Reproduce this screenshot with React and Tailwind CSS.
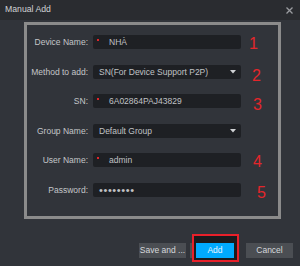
import React from 'react'

const rows = [
  { label: 'Device Name:', value: 'NHÀ', req: true, num: '1', numCls: 'ml-[8px] mt-[3px]' },
  { label: 'Method to add:', value: 'SN(For Device Support P2P)', select: true, num: '2', numCls: 'ml-[11px] mt-[5px]' },
  { label: 'SN:', value: '6A02864PAJ43829', req: true, num: '3', numCls: 'ml-[12px] mt-[5px]' },
  { label: 'Group Name:', value: 'Default Group', select: true },
  { label: 'User Name:', value: 'admin', req: true, num: '4', numCls: 'ml-[12px] mt-[3px]' },
  { label: 'Password:', value: '••••••••', pass: true, num: '5', numCls: 'ml-[16px] mt-[4px]' },
]

function Row({ label, value, req, select, pass, num, numCls }) {
  return (
    <div className="flex items-start h-[14px]">
      <div className="w-[62px] shrink-0 pr-[1px] text-right text-[8.5px] leading-[14px] text-[#c4c6c9] whitespace-nowrap">{label}</div>
      <div className="ml-[4px] w-[148px] h-[14px] shrink-0 rounded-[2px] bg-[#1e2024] flex items-center relative">
        {req && <span className="absolute left-[4px] top-[4px] w-[2px] h-[2px] bg-[#e0262b]" />}
        <span
          className={`${req ? 'ml-[16px]' : 'ml-[6px]'} ${pass ? 'text-[11px] tracking-[0.6px]' : 'text-[8.5px]'} leading-[14px] text-[#c0c2c5] whitespace-nowrap`}
        >
          {value}
        </span>
        {select && (
          <svg className="absolute right-[5px] top-[5.5px]" width="6" height="4" viewBox="0 0 6 4">
            <path d="M0 0H6L3 3.5Z" fill="#d0d2d5" />
          </svg>
        )}
      </div>
      {num && <span className={`${numCls} text-[16px] leading-[12px] text-[#e3262b]`}>{num}</span>}
    </div>
  )
}

export default function App() {
  return (
    <div className="w-[300px] h-[266px] bg-[#31343a] overflow-hidden" style={{ fontFamily: '"Liberation Sans", Arial, sans-serif' }}>
      <div className="h-[20px] bg-[#2a2c30] flex items-center justify-between pl-[5px] pr-[7px]">
        <span className="text-[8.7px] text-[#d0d2d5]">Manual Add</span>
        <svg width="7" height="7" viewBox="0 0 7 7">
          <path d="M0.5 0.5L6.5 6.5M6.5 0.5L0.5 6.5" stroke="#9a9ca0" strokeWidth="1.3" />
        </svg>
      </div>
      <div className="ml-[24px] mt-[2px] w-[257px] h-[197px] border-[3px] border-[#8b8b8b] pt-[10px] flex flex-col gap-[15.5px]">
        {rows.map((r) => <Row key={r.label} {...r} />)}
      </div>
      <div className="mt-[15px] flex items-start">
        <button className="ml-[139px] mt-[9px] w-[47px] h-[15px] bg-[#4b4e53] text-[8.5px] text-[#d6d8db] leading-[15px] whitespace-nowrap">Save and ...</button>
        <div className="ml-[4px] mt-[9px] w-[3px] h-[15px] bg-[#4b4e53]" />
        <div className="-ml-[1px] w-[47px] h-[28px] border-[2px] border-[#e8202a] bg-[#1a1b1e] pt-[7px] pl-[2px] flex items-start">
          <button className="w-[38px] h-[15px] bg-[#00aaff] text-[8.5px] text-[#e8f6ff] leading-[15px]">Add</button>
        </div>
        <button className="ml-[7px] mt-[9px] w-[47px] h-[15px] bg-[#4b4e53] text-[8.5px] text-[#d6d8db] leading-[15px]">Cancel</button>
      </div>
    </div>
  )
}
